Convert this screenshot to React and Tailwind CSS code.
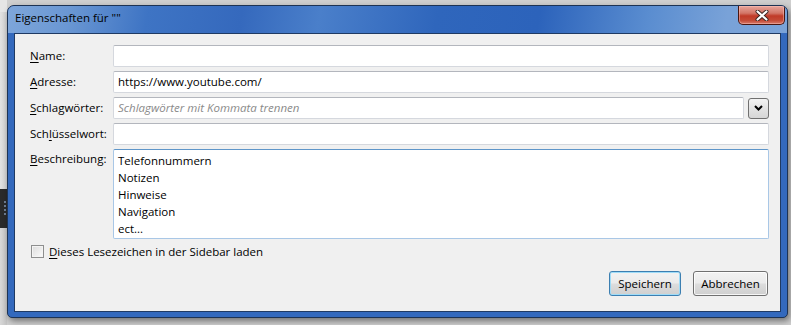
import React from 'react';

const font = { fontFamily: '"Open Sans", "Noto Sans", Arial, sans-serif' };

const Label = ({ ul, before = '', after, top = false }) => (
  <div className={`pl-[15px] text-[11.5px] text-black leading-none whitespace-nowrap ${top ? 'pt-[4px]' : 'flex items-center'}`}>
    <span>
      {before}
      <span className="underline underline-offset-2">{ul}</span>
      {after}
    </span>
  </div>
);

const TextInput = ({ value, placeholder }) => (
  <div className="h-[22px] flex-1 bg-white border border-[#d5d8de] border-t-[#b3b6bd] rounded-[2px] flex items-center px-[4px] text-[11.5px]">
    {value ? (
      <span className="text-black">{value}</span>
    ) : (
      <span className="text-[#8a8a8a] italic">{placeholder}</span>
    )}
  </div>
);

const CloseButton = () => (
  <div className="w-[47px] h-[19px] rounded-b-[5px] border border-t-0 border-[#4a1610] bg-[linear-gradient(to_bottom,#e8a69c_0%,#d27566_40%,#c03a28_55%,#c44a36_80%,#d77a6a_100%)] flex items-center justify-center shadow-[inset_0_0_0_1px_rgba(255,200,190,0.45)]">
    <svg width="14" height="11" viewBox="0 0 14 11">
      <path d="M2.5 1.5 L11.5 9.5 M11.5 1.5 L2.5 9.5" stroke="#3a2420" strokeWidth="4" strokeLinecap="round" />
      <path d="M2.5 1.5 L11.5 9.5 M11.5 1.5 L2.5 9.5" stroke="#ffffff" strokeWidth="2.2" strokeLinecap="round" />
    </svg>
  </div>
);

const Button = ({ children, primary }) => (
  <div
    className={`h-[25px] rounded-[3px] border flex items-center justify-center text-[11.5px] text-black bg-[linear-gradient(to_bottom,#f2f2f2_0%,#ebebeb_48%,#dddddd_52%,#cfcfcf_100%)] ${
      primary
        ? 'w-[72px] border-[#3c7fb1] shadow-[inset_0_0_0_1px_#9fdcf8]'
        : 'w-[75px] border-[#707070] shadow-[inset_0_0_0_1px_rgba(255,255,255,0.8)]'
    }`}
  >
    {children}
  </div>
);

export default function App() {
  return (
    <div className="w-[791px] h-[325px] bg-[#cfcfcf] flex overflow-hidden" style={font}>
      <div className="w-[7px] shrink-0 flex flex-col">
        <div className="h-[12px] bg-[#e6e6e6]" />
        <div className="h-[177px] bg-[linear-gradient(to_right,#e2e2e2,#d0d0d0)]" />
        <div className="h-[39px] bg-[#2a2a2a] flex flex-col items-end pr-[1px] pt-[12px] gap-[2px]">
          <div className="w-[2px] h-[2px] bg-[#6f7f95]" />
          <div className="w-[2px] h-[2px] bg-[#6f7f95]" />
          <div className="w-[2px] h-[2px] bg-[#6f7f95]" />
          <div className="w-[2px] h-[2px] bg-[#6f7f95]" />
        </div>
        <div className="flex-1 bg-[linear-gradient(to_right,#d8d8d8,#c4c4c4)]" />
      </div>

      <div className="mt-[5px] w-[781px] h-[313px] shrink-0 rounded-t-[7px] rounded-b-[5px] border border-[#1d3354] bg-[#3369bd] flex flex-col overflow-hidden shadow-[2px_3px_6px_rgba(0,0,0,0.45)]">
        <div className="h-[27px] shrink-0 flex justify-between items-start pl-[7px] pr-[2px] bg-[linear-gradient(100deg,#7ea6da_0%,#6a97d3_8%,#3e74c4_18%,#3569bd_30%,#4a7fca_40%,#2f66bc_55%,#2c63bb_68%,#5a8dd0_82%,#79a2d8_92%,#7aa3d8_100%)]">
          <span className="pt-[6px] text-[11.5px] text-black leading-none">Eigenschaften für ""</span>
          <CloseButton />
        </div>

        <div className="flex-1 flex px-[6px] pb-[5px]">
          <div className="flex-1 border border-[#1f3a63] bg-[#f0f0f0] flex flex-col pt-[11px] pr-[11px]">
            <div className="grid grid-cols-[98px_1fr] gap-y-[4px]">
              <Label ul="N" after="ame:" />
              <div className="flex">
                <TextInput value="" placeholder="" />
              </div>

              <Label ul="A" after="dresse:" />
              <div className="flex">
                <TextInput value="https://www.youtube.com/" />
              </div>

              <Label ul="S" after="chlagwörter:" />
              <div className="flex items-center gap-[4px]">
                <TextInput placeholder="Schlagwörter mit Kommata trennen" />
                <div className="w-[21px] h-[21px] rounded-[3px] border border-[#707070] bg-[linear-gradient(to_bottom,#f3f3f3,#e3e3e3_50%,#d6d6d6)] flex items-center justify-center">
                  <svg width="9" height="6" viewBox="0 0 9 6">
                    <path d="M1 1 L4.5 4.5 L8 1" stroke="#000" strokeWidth="2" fill="none" />
                  </svg>
                </div>
              </div>

              <Label before="Sch" ul="l" after="üsselwort:" />
              <div className="flex">
                <TextInput value="" placeholder="" />
              </div>

              <Label ul="B" after="eschreibung:" top />
              <div className="h-[90px] bg-white border border-[#a9c7e6] border-t-[#5e95c9] rounded-[2px] px-[4px] pt-[2px] text-[11.5px] leading-[17px] text-black">
                <div>Telefonnummern</div>
                <div>Notizen</div>
                <div>Hinweise</div>
                <div>Navigation</div>
                <div>ect...</div>
              </div>
            </div>

            <div className="mt-[6px] pl-[16px] flex items-center gap-[5px]">
              <div className="w-[13px] h-[13px] border border-[#8e8f8f] bg-[linear-gradient(135deg,#dcdcdc,#fbfbfb)] shadow-[inset_0_0_0_1px_#f4f4f4]" />
              <span className="text-[11.5px] text-black leading-none">
                <span className="underline underline-offset-2">D</span>ieses Lesezeichen in der Sidebar laden
              </span>
            </div>

            <div className="mt-[13px] flex justify-end gap-[12px] pr-[1px]">
              <Button primary>Speichern</Button>
              <Button>Abbrechen</Button>
            </div>
          </div>
        </div>
      </div>
    </div>
  );
}
